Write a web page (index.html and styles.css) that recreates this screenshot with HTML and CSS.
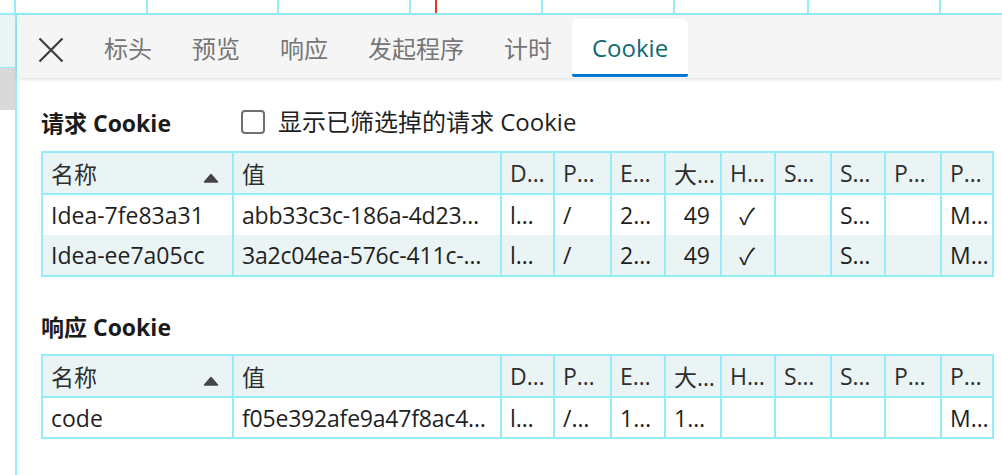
FILE: index.html
```html
<!DOCTYPE html>
<html lang="zh-CN">
<head>
<meta charset="utf-8">
<title>Cookie</title>
<link rel="stylesheet" href="styles.css">
</head>
<body>
<div class="waterfall">
  <div class="wf-cell c1"></div>
  <div class="wf-cell c2"></div>
  <div class="wf-cell c3"></div>
  <div class="wf-cell c4"></div>
  <div class="wf-cell c5"><div class="wf-marker"></div></div>
  <div class="wf-cell c6"></div>
  <div class="wf-cell c7"></div>
  <div class="wf-cell c8"></div>
  <div class="wf-cell c9"></div>
</div>
<div class="main">
  <div class="sidebar">
    <div class="sb-row"></div>
    <div class="sb-row sel"></div>
  </div>
  <div class="panel">
    <div class="tabbar">
      <button class="close" aria-label="关闭">
        <svg width="26" height="26" viewBox="0 0 26 26"><path d="M1.5 1.5 L24.5 24.5 M24.5 1.5 L1.5 24.5" stroke="#3d3d3d" stroke-width="2.2" fill="none"/></svg>
      </button>
      <div class="tab">标头</div>
      <div class="tab">预览</div>
      <div class="tab">响应</div>
      <div class="tab">发起程序</div>
      <div class="tab">计时</div>
      <div class="tab active">Cookie</div>
    </div>
    <div class="content">
      <section class="cookies">
        <div class="sec-head">
          <h2 class="sec-title">请求 Cookie</h2>
          <label class="filter"><span class="box"></span>显示已筛选掉的请求 Cookie</label>
        </div>
        <table class="grid">
          <colgroup>
            <col class="w-name"><col class="w-value"><col class="w-d"><col class="w-p"><col class="w-e"><col class="w-size"><col class="w-h"><col class="w-s1"><col class="w-s2"><col class="w-pk"><col class="w-pr">
          </colgroup>
          <thead>
            <tr>
              <th><div class="sort"><span class="clip">名称</span><svg class="tri" width="16" height="10" viewBox="0 0 16 10"><path d="M1.5 9 L8 1.5 L14.5 9 Z" fill="#454545" stroke="#454545" stroke-width="1.5" stroke-linejoin="round"/></svg></div></th>
              <th>值</th><th title="Domain">D…</th><th title="Path">P…</th><th title="Expires / Max-Age">E…</th><th title="大小">大小</th><th title="HttpOnly">H…</th><th title="Secure">S…</th><th title="SameSite">S…</th><th title="Partition Key">P…</th><th title="Priority">P…</th>
            </tr>
          </thead>
          <tbody>
            <tr>
              <td>Idea-7fe83a31</td><td class="val" title="abb33c3c-186a-4d23-9f4e-2c1d7a8b6e50">abb33c3c-186a-4d23…</td><td title="localhost">l…</td><td>/</td><td title="2024-11-18T07:42:10.000Z">2…</td><td class="num">49</td><td class="chk">✓</td><td></td><td title="Strict">S…</td><td></td><td title="Medium">M…</td>
            </tr>
            <tr class="alt">
              <td>Idea-ee7a05cc</td><td class="val" title="3a2c04ea-576c-411c-8d2b-6f0e9a1c3b47">3a2c04ea-576c-411c-…</td><td title="localhost">l…</td><td>/</td><td title="2024-11-18T07:42:10.000Z">2…</td><td class="num">49</td><td class="chk">✓</td><td></td><td title="Strict">S…</td><td></td><td title="Medium">M…</td>
            </tr>
          </tbody>
        </table>
      </section>
      <section class="cookies resp">
        <div class="sec-head">
          <h2 class="sec-title">响应 Cookie</h2>
        </div>
        <table class="grid">
          <colgroup>
            <col class="w-name"><col class="w-value"><col class="w-d"><col class="w-p"><col class="w-e"><col class="w-size"><col class="w-h"><col class="w-s1"><col class="w-s2"><col class="w-pk"><col class="w-pr">
          </colgroup>
          <thead>
            <tr>
              <th><div class="sort"><span class="clip">名称</span><svg class="tri" width="16" height="10" viewBox="0 0 16 10"><path d="M1.5 9 L8 1.5 L14.5 9 Z" fill="#454545" stroke="#454545" stroke-width="1.5" stroke-linejoin="round"/></svg></div></th>
              <th>值</th><th title="Domain">D…</th><th title="Path">P…</th><th title="Expires / Max-Age">E…</th><th title="大小">大小</th><th title="HttpOnly">H…</th><th title="Secure">S…</th><th title="SameSite">S…</th><th title="Partition Key">P…</th><th title="Priority">P…</th>
            </tr>
          </thead>
          <tbody>
            <tr>
              <td>code</td><td class="val" title="f05e392afe9a47f8ac4e21b7d9c60a13">f05e392afe9a47f8ac4…</td><td title="localhost">l…</td><td title="/api">/…</td><td title="1800">1…</td><td title="118">1…</td><td class="chk"></td><td></td><td></td><td></td><td title="Medium">M…</td>
            </tr>
          </tbody>
        </table>
      </section>
    </div>
  </div>
</div>
</body>
</html>
```

FILE: styles.css
```css
* { box-sizing: border-box; }
html, body {
  margin: 0;
  height: 475px;
  overflow: hidden;
  background: #fff;
  font-family: "Open Sans", "Noto Sans CJK SC", sans-serif;
  color: #1f1f1f;
}

/* waterfall strip */
.waterfall {
  display: flex;
  height: 15px;
  border-bottom: 2px solid #94edf9;
}
.wf-cell { border-right: 2px solid #94edf9; height: 13px; flex: none; }
.c1 { width: 16px; }
.c2 { width: 132px; }
.c3 { width: 131px; }
.c4 { width: 132px; }
.c5 { width: 132px; }
.c6 { width: 132px; }
.c7 { width: 134px; }
.c8 { width: 132px; }
.c9 { flex: 1; border-right: none; }
.wf-marker { margin-left: 24px; width: 2px; height: 13px; background: #e2352b; }

/* main */
.main { display: flex; height: 460px; }
.sidebar {
  width: 17px;
  flex: none;
  border-right: 2px solid #94edf9;
}
.sb-row { height: 53px; background: #eaf4f5; border-bottom: 1px solid #94edf9; }
.sb-row.sel { height: 42px; background: #d9d9d9; border-bottom: none; }

.panel { flex: 1; display: flex; flex-direction: column; min-width: 0; }

.tabbar {
  height: 63px;
  background: #f5f5f5;
  display: flex;
  align-items: stretch;
  box-shadow: 0 1px 4px rgba(0, 0, 0, 0.14);
  position: relative;
  z-index: 1;
}
.close {
  width: 67px;
  border: none;
  background: transparent;
  padding: 6px 0 0 0;
  display: flex;
  align-items: center;
  justify-content: center;
}
.close svg { display: block; }
.tab {
  margin: 4px 0 1px;
  padding: 2px 20px 0;
  display: flex;
  align-items: center;
  font-size: 24px;
  color: #767676;
  border-bottom: 3px solid transparent;
  border-radius: 5px 5px 2px 2px;
}
.tab.active {
  background: #fff;
  color: #0f6b73;
  border-bottom-color: #0078d4;
}

/* content */
.content { padding: 22px 10px 0 24px; }
.sec-head {
  height: 46px;
  margin-bottom: 5px;
  display: flex;
  align-items: center;
}
.sec-title {
  margin: 0;
  width: 200px;
  font-size: 23px;
  font-weight: 700;
  color: #1b1b1b;
  padding-bottom: 2px;
}
.filter {
  display: flex;
  align-items: center;
  font-size: 24px;
  color: #1f1f1f;
  padding-bottom: 5px;
}
.box {
  width: 24px;
  height: 24px;
  border: 2px solid #6f6f6f;
  border-radius: 4px;
  background: #fff;
  margin-right: 13px;
  margin-top: 2px;
}
.resp { margin-top: 27px; }
.resp .sec-head { margin-bottom: 4px; }

/* grid */
.grid {
  width: 951px;
  table-layout: fixed;
  border-collapse: collapse;
  border: 2px solid #94edf9;
  font-size: 23px;
}
.w-name { width: 191px; }
.w-value { width: 268px; }
.w-d { width: 53px; }
.w-p { width: 57px; }
.w-e { width: 54px; }
.w-size { width: 56px; }
.w-h { width: 54px; }
.w-s1 { width: 56px; }
.w-s2 { width: 54px; }
.w-pk { width: 56px; }
.w-pr { width: 52px; }

.grid th, .grid td {
  padding: 0 10px 0 8px;
  white-space: nowrap;
  overflow: hidden;
  text-overflow: ellipsis;
  text-align: left;
  border-left: 2px solid #94edf9;
  border-right: 2px solid #94edf9;
}
.grid th {
  height: 42px;
  font-weight: 400;
  color: #2e2e2e;
  background: #ebf4f5;
  border-bottom: 2px solid #94edf9;
}
.grid td { height: 41px; color: #1f1f1f; }
.grid td.val { letter-spacing: -0.2px; }
.grid tr.alt td { background: #ebf4f5; }
.grid td.num { text-align: right; }
.grid td.chk { text-align: center; font-family: "Noto Sans CJK SC", sans-serif; }
.sort { display: flex; align-items: center; justify-content: space-between; padding-right: 3px; }
.clip { overflow: hidden; text-overflow: ellipsis; }
.tri { flex: none; margin-top: 10px; }
```
